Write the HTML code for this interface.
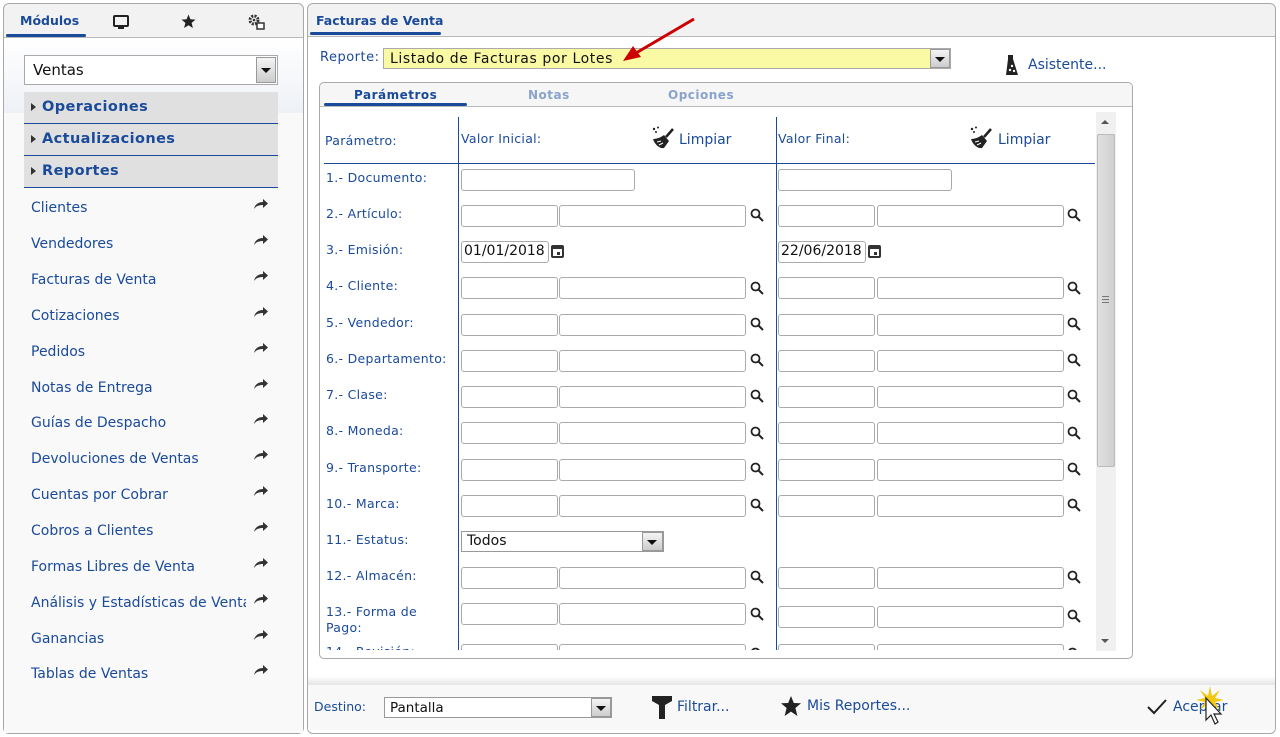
<!DOCTYPE html>
<html><head><meta charset="utf-8"><style>
*{box-sizing:border-box;margin:0;padding:0}
body{width:1280px;height:737px;background:#fff;font-family:"DejaVu Sans","Liberation Sans",sans-serif;color:#1a4a9a;position:relative;overflow:hidden}
.a{position:absolute}
.panel{border:1px solid #a8a8a8;border-radius:6px;background:#f9f9f9}
.tabbar{background:#f2f2f2;border-bottom:1px solid #b8b8b8}
.in{position:absolute;height:22px;border:1px solid #aaa;border-radius:3px;background:#fff}
.lbl{position:absolute;font-size:12.5px;letter-spacing:.3px}
.li{position:absolute;left:31px;font-size:14px;margin-top:2px}
.arr{position:absolute;left:253px;width:16px;height:12px}
.acc{position:absolute;left:24px;width:254px;height:32px;background:#e0e0e0;border-bottom:1px solid #1a4a9a;font-weight:bold;font-size:14.5px;padding:7px 0 0 18px;letter-spacing:.4px}
.acc:before{content:"";position:absolute;left:7px;top:11px;border-left:5px solid #333;border-top:4px solid transparent;border-bottom:4px solid transparent}
.mg{position:absolute;width:14px;height:14px}
</style></head><body>
<div class="a panel" style="left:3px;top:3px;width:301px;height:731px"></div>
<div class="a tabbar" style="left:4px;top:4px;width:299px;height:34px;border-radius:6px 6px 0 0"></div>
<div class="a" style="left:20px;top:13px;font-size:12.5px;font-weight:bold">Módulos</div>
<div class="a" style="left:6px;top:34px;width:80px;height:3px;background:#1a4a9a;border-radius:2px"></div>
<svg class="a" style="left:113px;top:15px" width="16" height="15"><rect x="1" y="1" width="14" height="10" rx="1" fill="none" stroke="#222" stroke-width="2"/><rect x="5" y="12" width="6" height="2" fill="#222"/></svg>
<svg class="a" style="left:181px;top:14px" width="15" height="15"><path d="M7.5 0.5L9.4 5.3 14.5 5.6 10.6 8.9 11.9 14 7.5 11.2 3.1 14 4.4 8.9 0.5 5.6 5.6 5.3Z" fill="#222"/></svg>
<svg class="a" style="left:248px;top:14px" width="17" height="17"><circle cx="6" cy="6" r="4" fill="none" stroke="#333" stroke-width="3" stroke-dasharray="2 1.2"/><circle cx="6" cy="6" r="1.3" fill="#333"/><rect x="9" y="9" width="7" height="6" fill="#fff" stroke="#333" stroke-width="1.5"/></svg>
<div class="a" style="left:4px;top:38px;width:299px;height:75px;background:linear-gradient(#fff,#eef1f6)"></div>
<div class="a" style="left:24px;top:55px;width:254px;height:30px;border:1px solid #aaa;background:#fff;font-size:15px;color:#111;padding:5px 0 0 8px">Ventas</div>
<div class="a" style="left:256px;top:57px;width:20px;height:26px;background:linear-gradient(#f4f4f4,#ccc);border:1px solid #999"></div>
<div class="a" style="left:261px;top:68px;border-top:5px solid #111;border-left:5px solid transparent;border-right:5px solid transparent"></div>
<div class="acc" style="top:92px">Operaciones</div>
<div class="acc" style="top:124px">Actualizaciones</div>
<div class="acc" style="top:156px">Reportes</div>
<div class="a" style="left:4px;top:188px;width:299px;height:545px;background:#f9f9f9"></div>
<div class="li" style="top:198px">Clientes</div>
<div class="li" style="top:234px">Vendedores</div>
<div class="li" style="top:270px">Facturas de Venta</div>
<div class="li" style="top:306px">Cotizaciones</div>
<div class="li" style="top:342px">Pedidos</div>
<div class="li" style="top:378px">Notas de Entrega</div>
<div class="li" style="top:413px">Guías de Despacho</div>
<div class="li" style="top:449px">Devoluciones de Ventas</div>
<div class="li" style="top:485px">Cuentas por Cobrar</div>
<div class="li" style="top:521px">Cobros a Clientes</div>
<div class="li" style="top:557px">Formas Libres de Venta</div>
<div class="li" style="top:593px;width:215px;overflow:hidden;white-space:nowrap">Análisis y Estadísticas de Ventas</div>
<div class="li" style="top:629px">Ganancias</div>
<div class="li" style="top:664px">Tablas de Ventas</div>
<svg width="0" height="0" style="position:absolute"><defs><symbol id="ar" viewBox="0 0 16 12"><path d="M1 11C2 6 6 4 10 4V1L15 5.5 10 10V7C6 7 3 8 1 11Z" fill="#333"/></symbol>
<symbol id="mg" viewBox="0 0 14 14"><circle cx="5.5" cy="5.5" r="4" fill="none" stroke="#222" stroke-width="1.8"/><path d="M8.5 8.5L13 13" stroke="#222" stroke-width="2"/></symbol></defs></svg>
<svg class="arr" style="top:198px"><use href="#ar"/></svg>
<svg class="arr" style="top:234px"><use href="#ar"/></svg>
<svg class="arr" style="top:270px"><use href="#ar"/></svg>
<svg class="arr" style="top:306px"><use href="#ar"/></svg>
<svg class="arr" style="top:342px"><use href="#ar"/></svg>
<svg class="arr" style="top:378px"><use href="#ar"/></svg>
<svg class="arr" style="top:413px"><use href="#ar"/></svg>
<svg class="arr" style="top:449px"><use href="#ar"/></svg>
<svg class="arr" style="top:485px"><use href="#ar"/></svg>
<svg class="arr" style="top:521px"><use href="#ar"/></svg>
<svg class="arr" style="top:557px"><use href="#ar"/></svg>
<svg class="arr" style="top:593px"><use href="#ar"/></svg>
<svg class="arr" style="top:629px"><use href="#ar"/></svg>
<svg class="arr" style="top:664px"><use href="#ar"/></svg>

<div class="a panel" style="left:307px;top:3px;width:969px;height:731px;background:#fff"></div>
<div class="a tabbar" style="left:308px;top:4px;width:967px;height:33px;border-radius:6px 6px 0 0"></div>
<div class="a" style="left:316px;top:13px;font-size:12.5px;font-weight:bold">Facturas de Venta</div>
<div class="a" style="left:310px;top:32px;width:131px;height:3px;background:#1a4a9a;border-radius:2px"></div>
<div class="a" style="left:320px;top:50px;font-size:13px;letter-spacing:.5px">Reporte:</div>
<div class="a" style="left:383px;top:48px;width:568px;height:21px;background:#fafaa4;border:1px solid #aaa;font-size:14px;color:#111;padding:2px 0 0 6px;letter-spacing:.6px">Listado de Facturas por Lotes</div>
<div class="a" style="left:930px;top:49px;width:20px;height:19px;background:linear-gradient(#f4f4f4,#ccc);border:1px solid #999"></div>
<div class="a" style="left:935px;top:57px;border-top:5px solid #111;border-left:5px solid transparent;border-right:5px solid transparent"></div>
<svg class="a" style="left:1004px;top:54px" width="16" height="22"><path d="M4 1H9V5L14 21H2L4 5Z" fill="#222"/><circle cx="8" cy="12" r="1.2" fill="#fff"/><circle cx="6" cy="16" r="1.2" fill="#fff"/><circle cx="10" cy="17" r="1.2" fill="#fff"/></svg>
<div class="a" style="left:1028px;top:57px;font-size:14px">Asistente...</div>
<svg class="a" style="left:600px;top:15px" width="100" height="55"><path d="M94 4L36 38" stroke="#c00" stroke-width="3"/><path d="M23 46L33 31 41 42Z" fill="#c00"/></svg>

<div class="a" style="left:319px;top:82px;width:814px;height:577px;border:1px solid #aaa;border-radius:5px;background:#fff"></div>
<div class="a" style="left:320px;top:83px;width:812px;height:24px;background:#f6f6f6;border-bottom:1px solid #bbb;border-radius:5px 5px 0 0"></div>
<div class="a" style="left:354px;top:88px;font-size:12px;font-weight:bold;letter-spacing:.5px">Parámetros</div>
<div class="a" style="left:528px;top:88px;font-size:12px;font-weight:bold;color:#8aa3cc;letter-spacing:.5px">Notas</div>
<div class="a" style="left:668px;top:88px;font-size:12px;font-weight:bold;color:#8aa3cc;letter-spacing:.5px">Opciones</div>
<div class="a" style="left:324px;top:103px;width:143px;height:3px;background:#1a4a9a;border-radius:2px"></div>
<div class="a" style="left:1096px;top:112px;width:20px;height:539px;background:#f0f0f0"></div>
<div class="a" style="left:1097px;top:134px;width:18px;height:333px;background:linear-gradient(90deg,#e0e0e0,#d0d0d0);border:1px solid #bbb;border-radius:2px"></div>
<div class="a" style="left:1101px;top:120px;border-bottom:4px solid #555;border-left:4px solid transparent;border-right:4px solid transparent"></div>
<div class="a" style="left:1101px;top:639px;border-top:4px solid #555;border-left:4px solid transparent;border-right:4px solid transparent"></div>
<div class="a" style="left:1102px;top:296px;width:7px;height:7px;border-top:1px solid #777;border-bottom:1px solid #777"></div>
<div class="a" style="left:1102px;top:299px;width:7px;height:1px;background:#777"></div>
<div class="a" style="left:320px;top:110px;width:775px;height:540px;overflow:hidden">
<div class="a" style="left:138px;top:7px;width:1px;height:540px;background:#1a4a9a"></div>
<div class="a" style="left:456px;top:7px;width:1px;height:540px;background:#1a4a9a"></div>
<div class="a" style="left:4px;top:53px;width:771px;height:1px;background:#1a4a9a"></div>
<div class="lbl" style="left:5px;top:23px">Parámetro:</div>
<div class="lbl" style="left:141px;top:21px">Valor Inicial:</div>
<div class="lbl" style="left:458px;top:21px">Valor Final:</div>
<svg class="a" style="left:331px;top:16px" width="24" height="26"><circle cx="3" cy="3" r="1.2" fill="#222"/><circle cx="7" cy="1.5" r="1" fill="#222"/><circle cx="5" cy="6" r="1" fill="#222"/><path d="M22 3L15 11" stroke="#222" stroke-width="2.5"/><path d="M13 9C9 12 5 13 2 13 4 19 9 23 13 22L18 15Z" fill="#222"/><path d="M6 16L10 15M8 19L12 17" stroke="#fff" stroke-width="1"/></svg>
<div class="a" style="left:359px;top:22px;font-size:14px">Limpiar</div>
<svg class="a" style="left:649px;top:16px" width="24" height="26"><circle cx="3" cy="3" r="1.2" fill="#222"/><circle cx="7" cy="1.5" r="1" fill="#222"/><circle cx="5" cy="6" r="1" fill="#222"/><path d="M22 3L15 11" stroke="#222" stroke-width="2.5"/><path d="M13 9C9 12 5 13 2 13 4 19 9 23 13 22L18 15Z" fill="#222"/><path d="M6 16L10 15M8 19L12 17" stroke="#fff" stroke-width="1"/></svg>
<div class="a" style="left:678px;top:22px;font-size:14px">Limpiar</div>

<div class="lbl" style="left:6px;top:60px">1.- Documento:</div>
<div class="in" style="left:141px;top:59px;width:174px"></div>
<div class="in" style="left:458px;top:59px;width:174px"></div>
<div class="lbl" style="left:6px;top:96px">2.- Artículo:</div>
<div class="lbl" style="left:6px;top:132px">3.- Emisión:</div>
<div class="in" style="left:141px;top:131px;width:88px;font-size:14px;color:#111;padding:1px 2px;overflow:hidden;white-space:nowrap">01/01/2018</div>
<svg class="a" style="left:231px;top:134px" width="13" height="14"><rect x="1" y="2" width="11" height="11" rx="1" fill="none" stroke="#333" stroke-width="2"/><rect x="1" y="2" width="11" height="3" fill="#333"/><rect x="6" y="8" width="3" height="3" fill="#333"/></svg>
<div class="in" style="left:458px;top:131px;width:88px;font-size:14px;color:#111;padding:1px 2px;overflow:hidden;white-space:nowrap">22/06/2018</div>
<svg class="a" style="left:548px;top:134px" width="13" height="14"><rect x="1" y="2" width="11" height="11" rx="1" fill="none" stroke="#333" stroke-width="2"/><rect x="1" y="2" width="11" height="3" fill="#333"/><rect x="6" y="8" width="3" height="3" fill="#333"/></svg>
<div class="lbl" style="left:6px;top:168px">4.- Cliente:</div>
<div class="lbl" style="left:6px;top:205px">5.- Vendedor:</div>
<div class="lbl" style="left:6px;top:241px">6.- Departamento:</div>
<div class="lbl" style="left:6px;top:277px">7.- Clase:</div>
<div class="lbl" style="left:6px;top:313px">8.- Moneda:</div>
<div class="lbl" style="left:6px;top:350px">9.- Transporte:</div>
<div class="lbl" style="left:6px;top:386px">10.- Marca:</div>
<div class="lbl" style="left:6px;top:422px">11.- Estatus:</div>
<div class="a" style="left:141px;top:421px;width:203px;height:21px;border:1px solid #999;background:#fff;font-size:14px;color:#111;padding:1px 0 0 5px">Todos</div>
<div class="a" style="left:322px;top:422px;width:21px;height:19px;background:linear-gradient(#f4f4f4,#ccc);border:1px solid #999"></div>
<div class="a" style="left:327px;top:430px;border-top:5px solid #111;border-left:5px solid transparent;border-right:5px solid transparent"></div>
<div class="lbl" style="left:6px;top:458px">12.- Almacén:</div>
<div class="lbl" style="left:6px;top:494px;line-height:16px">13.- Forma de<br>Pago:</div>
<div class="lbl" style="left:6px;top:534px">14.- Revisión:</div>

<div class="in" style="left:141px;top:95px;width:97px"></div><div class="in" style="left:239px;top:95px;width:187px"></div><svg class="mg" style="left:430px;top:98px"><use href="#mg"/></svg>
<div class="in" style="left:458px;top:95px;width:97px"></div><div class="in" style="left:557px;top:95px;width:187px"></div><svg class="mg" style="left:747px;top:98px"><use href="#mg"/></svg>
<div class="in" style="left:141px;top:167px;width:97px"></div><div class="in" style="left:239px;top:167px;width:187px"></div><svg class="mg" style="left:430px;top:171px"><use href="#mg"/></svg>
<div class="in" style="left:458px;top:167px;width:97px"></div><div class="in" style="left:557px;top:167px;width:187px"></div><svg class="mg" style="left:747px;top:171px"><use href="#mg"/></svg>
<div class="in" style="left:141px;top:204px;width:97px"></div><div class="in" style="left:239px;top:204px;width:187px"></div><svg class="mg" style="left:430px;top:207px"><use href="#mg"/></svg>
<div class="in" style="left:458px;top:204px;width:97px"></div><div class="in" style="left:557px;top:204px;width:187px"></div><svg class="mg" style="left:747px;top:207px"><use href="#mg"/></svg>
<div class="in" style="left:141px;top:240px;width:97px"></div><div class="in" style="left:239px;top:240px;width:187px"></div><svg class="mg" style="left:430px;top:243px"><use href="#mg"/></svg>
<div class="in" style="left:458px;top:240px;width:97px"></div><div class="in" style="left:557px;top:240px;width:187px"></div><svg class="mg" style="left:747px;top:243px"><use href="#mg"/></svg>
<div class="in" style="left:141px;top:276px;width:97px"></div><div class="in" style="left:239px;top:276px;width:187px"></div><svg class="mg" style="left:430px;top:279px"><use href="#mg"/></svg>
<div class="in" style="left:458px;top:276px;width:97px"></div><div class="in" style="left:557px;top:276px;width:187px"></div><svg class="mg" style="left:747px;top:279px"><use href="#mg"/></svg>
<div class="in" style="left:141px;top:312px;width:97px"></div><div class="in" style="left:239px;top:312px;width:187px"></div><svg class="mg" style="left:430px;top:316px"><use href="#mg"/></svg>
<div class="in" style="left:458px;top:312px;width:97px"></div><div class="in" style="left:557px;top:312px;width:187px"></div><svg class="mg" style="left:747px;top:316px"><use href="#mg"/></svg>
<div class="in" style="left:141px;top:349px;width:97px"></div><div class="in" style="left:239px;top:349px;width:187px"></div><svg class="mg" style="left:430px;top:352px"><use href="#mg"/></svg>
<div class="in" style="left:458px;top:349px;width:97px"></div><div class="in" style="left:557px;top:349px;width:187px"></div><svg class="mg" style="left:747px;top:352px"><use href="#mg"/></svg>
<div class="in" style="left:141px;top:385px;width:97px"></div><div class="in" style="left:239px;top:385px;width:187px"></div><svg class="mg" style="left:430px;top:388px"><use href="#mg"/></svg>
<div class="in" style="left:458px;top:385px;width:97px"></div><div class="in" style="left:557px;top:385px;width:187px"></div><svg class="mg" style="left:747px;top:388px"><use href="#mg"/></svg>
<div class="in" style="left:141px;top:457px;width:97px"></div><div class="in" style="left:239px;top:457px;width:187px"></div><svg class="mg" style="left:430px;top:460px"><use href="#mg"/></svg>
<div class="in" style="left:458px;top:457px;width:97px"></div><div class="in" style="left:557px;top:457px;width:187px"></div><svg class="mg" style="left:747px;top:460px"><use href="#mg"/></svg>
<div class="in" style="left:141px;top:493px;width:97px"></div><div class="in" style="left:239px;top:493px;width:187px"></div><svg class="mg" style="left:430px;top:497px"><use href="#mg"/></svg>
<div class="in" style="left:458px;top:496px;width:97px"></div><div class="in" style="left:557px;top:496px;width:187px"></div><svg class="mg" style="left:747px;top:499px"><use href="#mg"/></svg>
<div class="in" style="left:141px;top:534px;width:97px"></div><div class="in" style="left:239px;top:534px;width:187px"></div><svg class="mg" style="left:430px;top:537px"><use href="#mg"/></svg>
<div class="in" style="left:458px;top:534px;width:97px"></div><div class="in" style="left:557px;top:534px;width:187px"></div><svg class="mg" style="left:747px;top:537px"><use href="#mg"/></svg>
</div>

<div class="a" style="left:308px;top:676px;width:967px;height:9px;background:linear-gradient(#fff,#e4e4e4)"></div>
<div class="a" style="left:308px;top:685px;width:967px;height:45px;background:#f8f8f8"></div>
<div class="a" style="left:314px;top:699px;font-size:12.5px">Destino:</div>
<div class="a" style="left:384px;top:697px;width:228px;height:21px;border:1px solid #999;background:#fff;font-size:13.5px;color:#111;padding:2px 0 0 5px">Pantalla</div>
<div class="a" style="left:591px;top:698px;width:20px;height:19px;background:linear-gradient(#f4f4f4,#ccc);border:1px solid #999"></div>
<div class="a" style="left:596px;top:706px;border-top:5px solid #111;border-left:5px solid transparent;border-right:5px solid transparent"></div>
<svg class="a" style="left:651px;top:695px" width="22" height="25"><path d="M1 1H21V6L14 10V24H8V10L1 6Z" fill="#222"/></svg>
<div class="a" style="left:677px;top:699px;font-size:14px">Filtrar...</div>
<svg class="a" style="left:780px;top:695px" width="22" height="22"><path d="M11 1L13.8 8 21 8.3 15.4 13 17.4 21 11 16.6 4.6 21 6.6 13 1 8.3 8.2 8Z" fill="#222"/></svg>
<div class="a" style="left:807px;top:698px;font-size:14px">Mis Reportes...</div>
<svg class="a" style="left:1146px;top:698px" width="22" height="18"><path d="M2 9L8 15 20 2" fill="none" stroke="#222" stroke-width="2"/></svg>
<div class="a" style="left:1173px;top:699px;font-size:14px">Aceptar</div>
<svg class="a" style="left:1190px;top:684px" width="40" height="44"><path d="M20 2L22 12 30 6 25 14 34 16 25 18 30 26 22 20 20 30 18 20 10 26 15 18 6 16 15 14 10 6 18 12Z" fill="#f2c811"/><path d="M16 14V36L21 31 25 40 28 38 24 30 31 30Z" fill="#fff" stroke="#222" stroke-width="1.2"/></svg>
</body></html>
